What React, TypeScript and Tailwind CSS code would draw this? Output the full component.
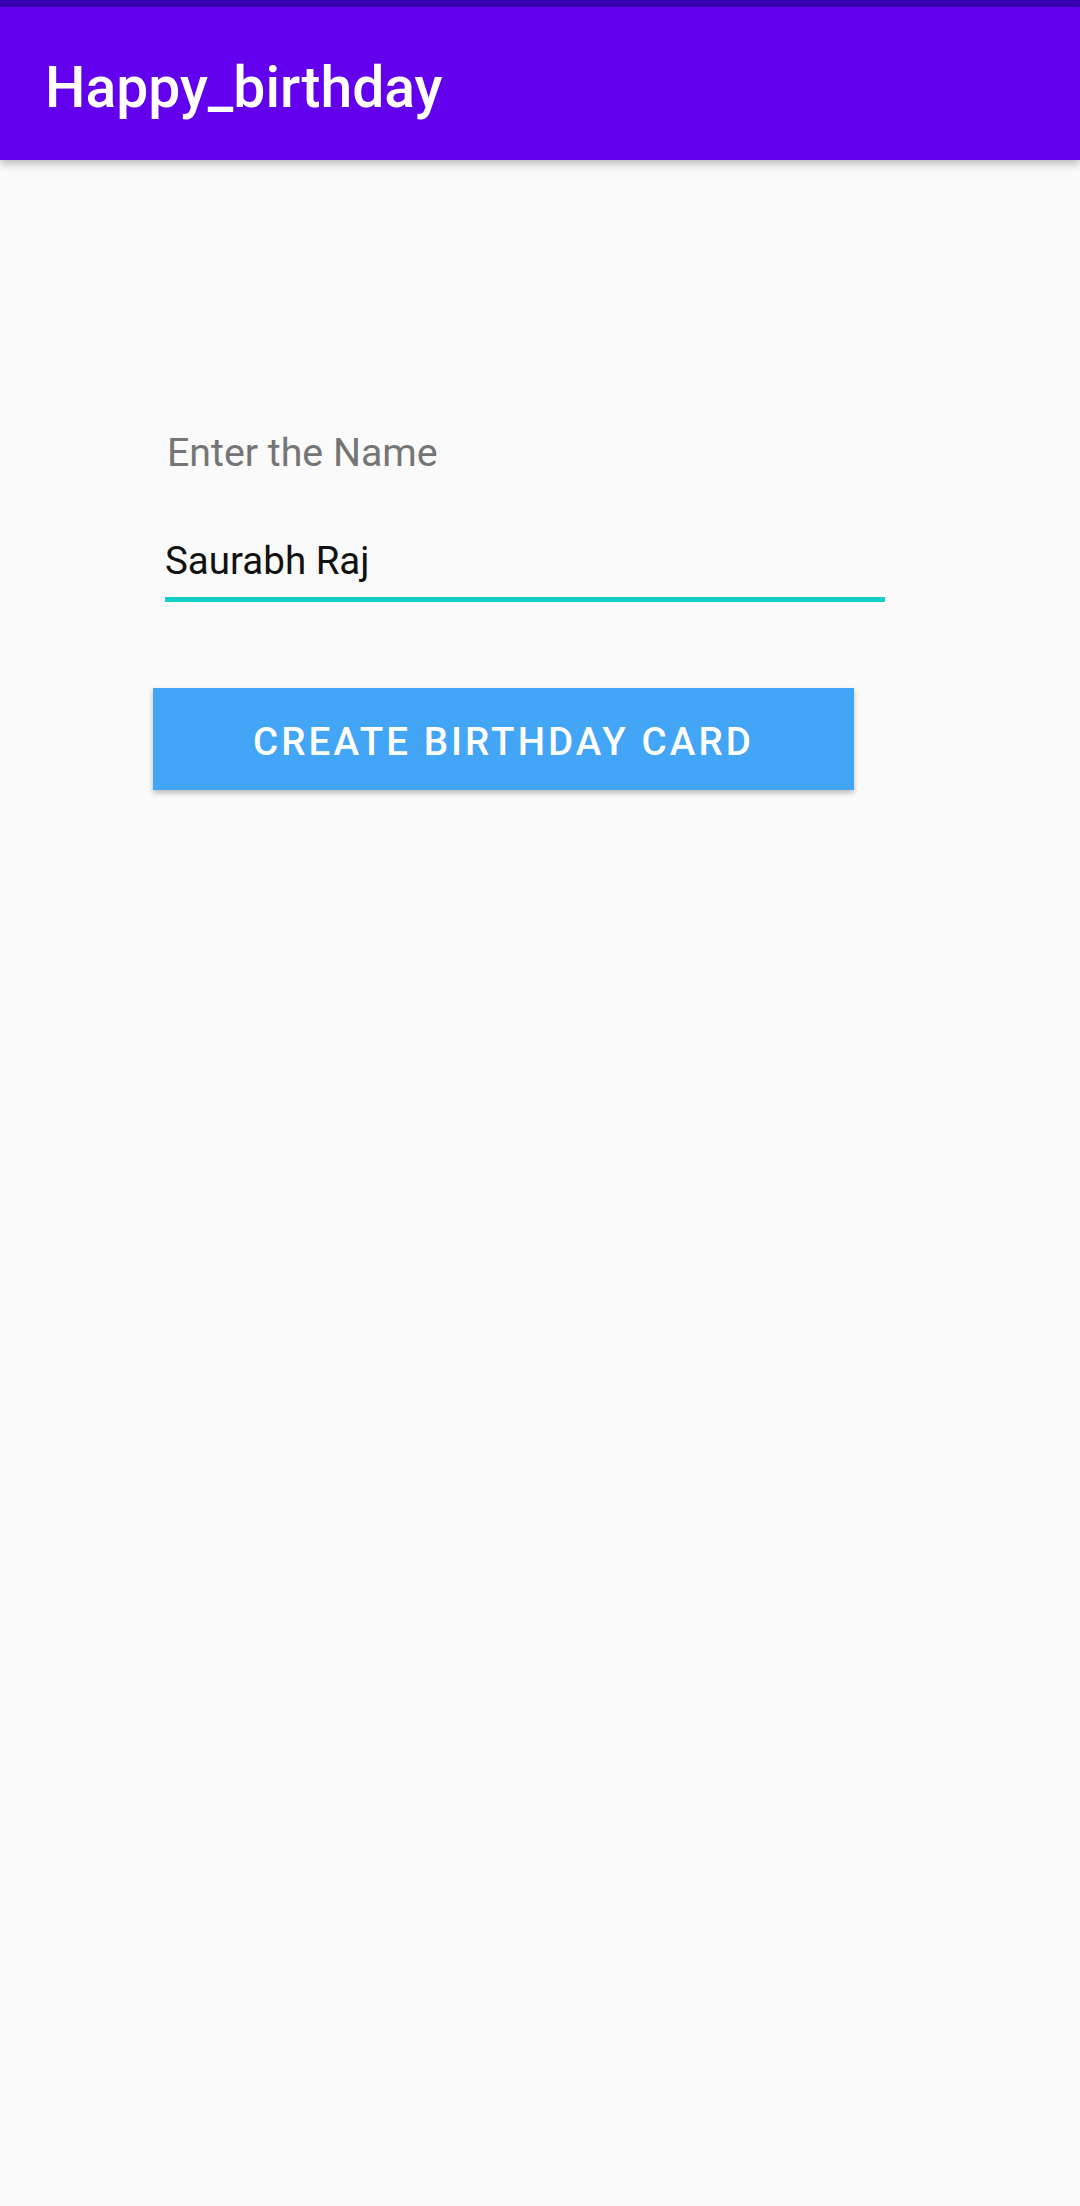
const roboto = { fontFamily: 'Roboto, "Noto Sans", sans-serif' }

export default function App() {
  return (
    <div className="min-h-[2206px] w-[1080px] bg-[#fafafa]" style={roboto}>
      <div className="h-[7px] bg-[#3700b3]" />
      <header className="flex h-[153px] items-center bg-[#6200ee] pl-[45px] pt-[8px] shadow-[0_4px_8px_rgba(0,0,0,0.25)]">
        <h1 className="text-[57px] font-medium leading-none text-white">Happy_birthday</h1>
      </header>

      <main className="flex flex-col pt-[271px]">
        <label className="ml-[167px] text-[39.3px] leading-[45px] text-[#757575]">
          Enter the Name
        </label>
        <input
          className="ml-[165px] mt-[62px] w-[720px] border-b-[5px] border-[#14d0c4] bg-transparent pb-[14px] text-[38.5px] leading-[45px] text-[#111111] outline-none"
          defaultValue="Saurabh Raj"
        />
        <button className="ml-[153px] mt-[86px] flex h-[102px] w-[701px] items-center justify-center bg-[#42a5f5] pt-[5px] text-[38.5px] font-medium tracking-[0.08em] text-white shadow-[0_3px_5px_rgba(0,0,0,0.25)]">
          CREATE BIRTHDAY CARD
        </button>
      </main>
    </div>
  )
}
